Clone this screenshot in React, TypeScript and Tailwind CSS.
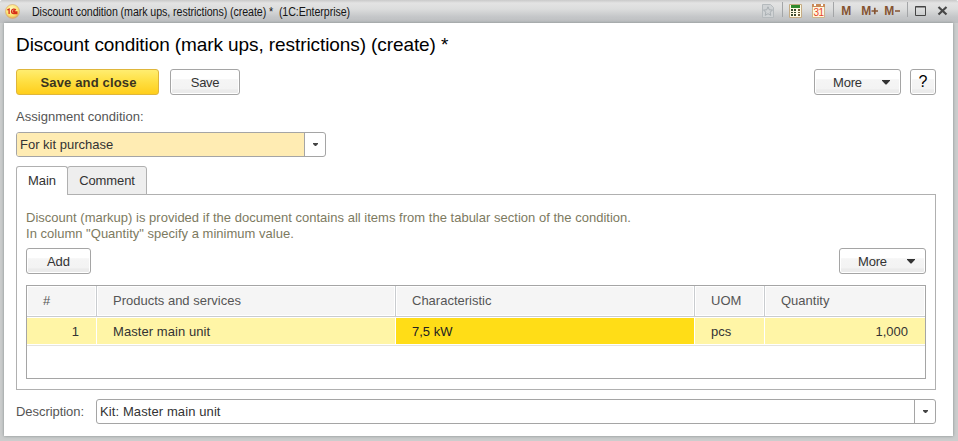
import type { ReactNode } from "react";

function Caret({ small = false }: { small?: boolean }) {
  return small ? (
    <svg width="5" height="3" viewBox="0 0 5 3" className="shrink-0"><path d="M0 0h5v1L3 3H2L0 1z" fill="#444" /></svg>
  ) : (
    <svg width="8" height="5" viewBox="0 0 8 5" className="shrink-0"><path d="M0 0h8v.8L4.500 4.500h-1L0 .8z" fill="#333" /></svg>
  );
}

function Button({ className, children }: { className: string; children: ReactNode }) {
  return (
    <button className={`flex h-[26px] shrink-0 items-center justify-center rounded-[3px] border border-[#a5a5a5] bg-[linear-gradient(to_bottom,#fff_0,#fff_38%,#f5f5f5_40%,#f3f3f3_80%,#ebebeb_82%,#ebebeb_100%)] text-[#333] shadow-[inset_0_0_0_1px_#fff] ${className}`}>
      {children}
    </button>
  );
}

function MoreButton() {
  return (
    <Button className="w-[87px] justify-between! pt-px pr-[10px] pl-[18px] tracking-[-0.2px]">
      More
      <Caret />
    </Button>
  );
}

function TitleBar() {
  return (
    <header className="flex h-[23px] shrink-0 items-center bg-[linear-gradient(to_bottom,#c9c9c9_0,#e3e3e3_3px,#dcdddd_9px,#c4c6c8_17px,#bdbfc1_23px)] pl-[5px]">
      <svg width="15" height="15" viewBox="0 0 15 15" className="shrink-0">
        <defs>
          <radialGradient id="logo" cx=".45" cy=".35" r=".65">
            <stop offset="0" stopColor="#fffbd0" />
            <stop offset=".7" stopColor="#fbe36d" />
            <stop offset="1" stopColor="#dda45c" />
          </radialGradient>
        </defs>
        <circle cx="7.500" cy="7.500" r="7" fill="url(#logo)" stroke="#d8ab78" strokeWidth=".7" />
        <path d="M2.300 6l1.800-1v5M10.800 6C9.800 4.600 6.500 4.700 6.500 7.300c0 1.600 1 2.200 2.300 2.200h3.700M10 7.200c-.7-1-1.700-.7-1.700.1 0 .6.400.7.900.7h3.300" fill="none" stroke="#d62f18" strokeWidth="1.300" />
      </svg>
      <span className="ml-[12px] origin-left scale-x-[0.889] text-[12px] tracking-[-0.09px] whitespace-pre text-[#151515]">Discount condition (mark ups, restrictions) (create) *  (1C:Enterprise)</span>
      <div className="ml-auto flex h-full shrink-0 items-center">
        <svg width="196" height="23" viewBox="0 0 196 23">
          <g fill="none" stroke="#a9afb3">
            <path d="M.5 4.500h8l3 3v10H.5z" fill="#d0d3d5" stroke="#b5babd" />
            <path d="M6 6.800l1.300 3 3.200.3-2.400 2.100.7 3.200L6 13.700l-2.800 1.700.7-3.200-2.400-2.100 3.200-.3z" />
          </g>
          <path d="M20.500 2v15M71.500 2v15M145.500 2v15" stroke="#a3a5a7" />
          <path d="M27.500 4.500h12v13h-12z" fill="#fffbe4" stroke="#c5ab83" />
          <path d="M29 5h9v3h-9z" fill="#2f8a2c" />
          <g fill="#3b4a30">
            <path d="M29 9h2v2h-2zM32 9h2v2h-2zM29 12h2v1h-2zM32 12h2v1h-2zM29 14h2v2h-2zM32 14h2v2h-2z" />
          </g>
          <path d="M36 9h2v2h-2zM36 12h2v1h-2zM36 14h2v2h-2z" fill="#6a5a35" />
          <path d="M50.500 4.500h12v13h-12z" fill="#fff8df" stroke="#cdb48c" />
          <path d="M50 4h13v3H50z" fill="#c98a58" />
          <path d="M52 4h2v2h-2zM59 4h2v2h-2z" fill="#fff" />
          <text x="56.500" y="16.300" textAnchor="middle" fontSize="10" letterSpacing="-.5" fill="#e8432b">31</text>
          <g fontSize="12" fontWeight="700" fill="#855331">
            <text x="79.300" y="15.300">M</text>
            <text x="99.300" y="15.300">M</text>
            <text x="122.300" y="15.300">M</text>
          </g>
          <path d="M109.500 11h6.500M112.800 7.700v6.600M133 11h5" stroke="#855331" strokeWidth="1.700" />
          <path d="M153.500 6.500h10v9h-10zM153.500 7h10" fill="none" stroke="#454545" />
          <path d="M176.500 7l8 7.500M184.500 7l-8 7.500" stroke="#474747" strokeWidth="2.200" />
        </svg>
      </div>
    </header>
  );
}

const columns = "grid grid-cols-[70px_299px_299px_70px_160px]";
const headCell = "flex items-center border-r border-[#c9cccf] pl-4 shadow-[inset_0_0_0_1px_#fff]";
const bodyCell = "flex items-center border-r border-white pt-px pl-4";

export default function App() {
  return (
    <div className="flex h-[441px] w-[958px] flex-col overflow-hidden rounded-t-[3px] bg-[#cbcdcd] font-['Liberation_Sans',Arial,sans-serif] text-[13px] leading-4 text-[#333]">
      <TitleBar />
      <main className="mr-[5px] ml-1 flex h-[413px] shrink-0 flex-col bg-white pr-[17px] pl-3 shadow-[0_0_3px_#858c8c]">
        <h1 className="mt-[11px] h-[22px] text-[19px] leading-[22px] tracking-[-0.09px] whitespace-nowrap text-black">Discount condition (mark ups, restrictions) (create) *</h1>

        <div className="mt-[13px] flex">
          <button className="h-[26px] w-[143px] rounded-[3px] border border-[#dfb63b] bg-[linear-gradient(to_bottom,#ffed70,#ffe044_45%,#ffce1b)] pt-px pl-[2px] font-bold tracking-[0.15px] text-[#3b3420]">Save and close</button>
          <Button className="ml-[11px] w-[70px] pt-px tracking-[-0.3px]">Save</Button>
          <div className="ml-auto flex gap-[9px]">
            <MoreButton />
            <Button className="w-[26px] text-[16px] text-black!">?</Button>
          </div>
        </div>

        <label className="mt-[14px] h-4 tracking-[0.02px] text-[#555]">Assignment condition:</label>
        <div className="mt-[7px] flex h-[25px] w-[310px] shrink-0 overflow-hidden rounded-[3px] border border-[#a5a5a5]">
          <div className="flex flex-1 items-center bg-[#ffecb3] pl-[3px]">For kit purchase</div>
          <div className="flex w-[21px] items-center justify-center border-l border-[#a5a5a5]"><Caret small /></div>
        </div>

        <div className="z-10 mt-[9px] flex h-[29px] shrink-0">
          <div className="flex w-[52px] items-center justify-center rounded-t-[3px] border border-b-0 border-[#b0b0b0] bg-white">Main</div>
          <div className="-ml-px flex w-[80px] items-center justify-center rounded-t-[3px] border border-[#b0b0b0] bg-[#eee] tracking-[-0.1px]">Comment</div>
        </div>
        <section className="-mt-px flex h-[196px] shrink-0 flex-col border border-[#b0b0b0] px-[9px]">
          <p className="mt-[15px] tracking-[0.015px] whitespace-nowrap text-[#7d7a5f]">
            Discount (markup) is provided if the document contains all items from the tabular section of the condition.
            <br />
            In column "Quantity" specify a minimum value.
          </p>
          <div className="mt-[6px] flex justify-between">
            <Button className="w-[65px] pt-px">Add</Button>
            <MoreButton />
          </div>
          <div className="mt-[11px] h-[94px] border border-[#a5a5a5]">
            <div className={`${columns} h-[31px] border-b border-[#c9cccf] bg-[#f5f5f5] text-[#555]`}>
              <div className={headCell}>#</div>
              <div className={headCell}>Products and services</div>
              <div className={headCell}>Characteristic</div>
              <div className={headCell}>UOM</div>
              <div className={`${headCell} border-r-0`}>Quantity</div>
            </div>
            <div className={`${columns} mt-px h-[26px] bg-[#fff5a6] text-[#333]`}>
              <div className={`${bodyCell} justify-end pr-[17px]`}>1</div>
              <div className={`${bodyCell} tracking-[0.07px]`}>Master main unit</div>
              <div className={`${bodyCell} bg-[#ffdd17] text-[#222]`}>7,5 kW</div>
              <div className={bodyCell}>pcs</div>
              <div className={`${bodyCell} justify-end border-r-0 pr-[17px]`}>1,000</div>
            </div>
            <div className="mt-px h-px bg-[#e4e4de]" />
          </div>
        </section>

        <div className="mt-[9px] flex h-[25px] shrink-0 items-center">
          <span className="w-20 tracking-[-0.05px] text-[#555]">Description:</span>
          <div className="flex h-full flex-1 rounded-[3px] border border-[#a5a5a5]">
            <div className="flex flex-1 items-center pl-[3px] tracking-[0.1px]">Kit: Master main unit</div>
            <div className="flex w-[21px] items-center justify-center border-l border-[#a5a5a5]"><Caret small /></div>
          </div>
        </div>
      </main>
    </div>
  );
}
